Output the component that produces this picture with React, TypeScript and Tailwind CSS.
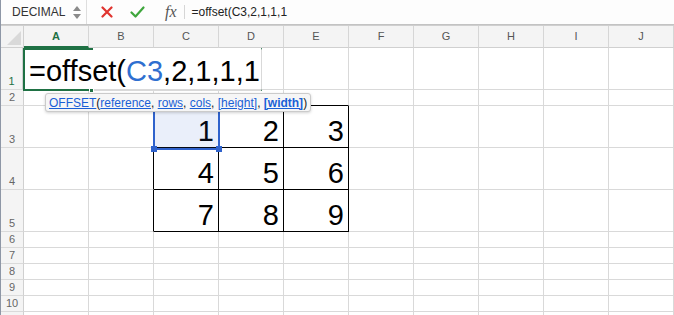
import * as React from "react";

const cols = ["A", "B", "C", "D", "E", "F", "G", "H", "I", "J"];
const rowHeights = [42, 16, 42, 42, 42, 16, 16, 16, 16, 16, 16];
const values: Record<string, string> = {
  C3: "1", D3: "2", E3: "3",
  C4: "4", D4: "5", E4: "6",
  C5: "7", D5: "8", E5: "9",
};

function inTable(c: number, r: number) {
  return c >= 2 && c <= 4 && r >= 3 && r <= 5;
}

function Cell({ c, r }: { c: number; r: number }) {
  const id = cols[c] + r;
  const value = values[id];
  // black outline of the C3:E5 block: right/bottom of own cells, plus neighbours on the left and top
  const blackRight = inTable(c, r) || (c === 1 && r >= 3 && r <= 5);
  const blackBottom = inTable(c, r) || (r === 2 && c >= 2 && c <= 4);
  return (
    <div
      className={[
        "flex items-end justify-end pr-[4px] pb-[1px] leading-none bg-white border-r border-b",
        blackRight ? "border-r-black" : "border-r-[#d9d9d9]",
        blackBottom ? "border-b-black" : "border-b-[#d9d9d9]",
      ].join(" ")}
    >
      {value && <span className="text-[29px] text-black">{value}</span>}
    </div>
  );
}

export default function App() {
  return (
    <div className="relative w-[674px] h-[315px] overflow-hidden bg-white border-l border-l-[#8e97a6]" style={{ fontFamily: '"Liberation Sans", Arial, sans-serif' }}>
      {/* Toolbar */}
      <div className="flex items-center h-[25px] bg-[#fdfdfd] border-b border-b-[#c3c3c3]">
        <div className="flex items-center w-[86px] h-full border-r border-r-[#dedede]">
          <span className="pl-[11px] text-[12px] text-[#333]">DECIMAL</span>
          <div className="ml-auto mr-[5px] flex flex-col items-center gap-[3px]">
            <svg width="8" height="5" viewBox="0 0 8 5"><path d="M4 0 L8 5 L0 5 Z" fill="#8a8a8a" /></svg>
            <svg width="8" height="5" viewBox="0 0 8 5"><path d="M0 0 L8 0 L4 5 Z" fill="#8a8a8a" /></svg>
          </div>
        </div>
        <svg className="ml-[14px]" width="12" height="12" viewBox="0 0 12 12">
          <path d="M1.5 1.5 L10.5 10.5 M10.5 1.5 L1.5 10.5" stroke="#e0342f" strokeWidth="2.2" strokeLinecap="round" />
        </svg>
        <svg className="ml-[17px]" width="15" height="12" viewBox="0 0 15 12">
          <path d="M1.5 6.5 L5.5 10.5 L13.5 1.5" stroke="#3ea63c" strokeWidth="2.2" fill="none" strokeLinecap="round" strokeLinejoin="round" />
        </svg>
        <span className="ml-[20px] text-[16px] italic text-[#555]" style={{ fontFamily: '"Liberation Serif", "Times New Roman", serif' }}>
          fx
        </span>
        <div className="ml-[7px] w-px h-[14px] bg-[#d6d6d6]" />
        <span className="ml-[7px] text-[12px] text-[#222]">=offset(C3,2,1,1,1</span>
      </div>
      <div className="h-px bg-[#ececec] border-b border-b-[#cfcfcf]" />

      {/* Sheet grid */}
      <div className="grid grid-cols-[23px_repeat(10,65px)]">
        {/* Column headers */}
        <div className="relative h-[22px] bg-[#f3f3f3] border-r border-b border-[#d0d0d0] overflow-hidden">
          <svg className="absolute right-[2px] bottom-[2px]" width="14" height="14" viewBox="0 0 14 14">
            <path d="M14 0 L14 14 L0 14 Z" fill="#d9d9d9" />
          </svg>
        </div>
        {cols.map((c, i) => (
          <div
            key={c}
            className={[
              "flex items-center justify-center h-[22px] bg-[#f4f4f4] border-r border-r-[#d6d6d6] text-[11px]",
              i === 0 ? "border-b-2 border-b-[#1f7144] text-[#1f7144] font-bold" : "border-b border-b-[#d0d0d0] text-[#555]",
            ].join(" ")}
          >
            {c}
          </div>
        ))}

        {/* Rows */}
        {rowHeights.map((h, ri) => {
          const r = ri + 1;
          return (
            <React.Fragment key={r}>
              <div
                className={[
                  "flex items-end justify-center pb-[1px] bg-[#f4f4f4] border-r border-b border-r-[#d0d0d0] border-b-[#dadada] text-[11px] leading-[14px]",
                  r === 1 ? "text-[#1f7144] border-r-2 border-r-[#1f7144]" : "text-[#666]",
                ].join(" ")}
                style={{ height: h }}
              >
                {r <= 10 ? r : ""}
              </div>
              {cols.map((_, c) => (
                <Cell key={c} c={c} r={r} />
              ))}
            </React.Fragment>
          );
        })}
      </div>

      {/* Cell editor over A1 */}
      <div className="absolute left-[22px] top-[48px] w-[239px] h-[43px] bg-white border-t-2 border-l-2 border-b-2 border-[#1f7144] border-r border-r-[#d9d9d9]">
        <div className="absolute left-[-2px] top-[-2px] w-[68px] h-[2px] bg-[#1f7144]" />
        <div className="absolute left-[68px] top-[-2px] right-0 h-[2px] bg-white" />
        <div className="absolute left-[68px] bottom-[-2px] right-0 h-[2px] bg-[#d9d9d9]" />
        <div className="absolute left-[64px] bottom-[-4px] w-[5px] h-[5px] bg-[#1f7144] border border-white" />
        <div className="pl-[4px] pt-[4px] text-[29px] leading-[34px] text-black whitespace-nowrap">
          =offset(<span className="text-[#2f6fd0]">C3</span>,2,1,1,1
        </div>
      </div>

      {/* C3 reference highlight */}
      <div className="absolute left-[152px] top-[106px] w-[67px] h-[44px] border-2 border-[#2f62cc] bg-[#2f62cc]/10">
        <div className="absolute left-[-4px] bottom-[-4px] w-[6px] h-[6px] bg-[#2f62cc]" />
        <div className="absolute right-[-4px] bottom-[-4px] w-[6px] h-[6px] bg-[#2f62cc]" />
      </div>

      {/* Function tooltip */}
      <div className="absolute left-[44px] top-[93px] h-[19px] px-[3px] flex items-center bg-[#f6f6f6] border border-[#cbcbcb] rounded-[3px] shadow-[0_1px_3px_rgba(0,0,0,0.18)] text-[12px] text-[#222] whitespace-nowrap">
        <span className="text-[#1a5fd6] underline">OFFSET</span>(
        <span className="text-[#1a5fd6] underline">reference</span>,&nbsp;
        <span className="text-[#1a5fd6] underline">rows</span>,&nbsp;
        <span className="text-[#1a5fd6] underline">cols</span>,&nbsp;
        <span className="text-[#1a5fd6] underline">[height]</span>,&nbsp;
        <span className="text-[#1a5fd6] underline font-bold">[width]</span>)
      </div>
    </div>
  );
}
